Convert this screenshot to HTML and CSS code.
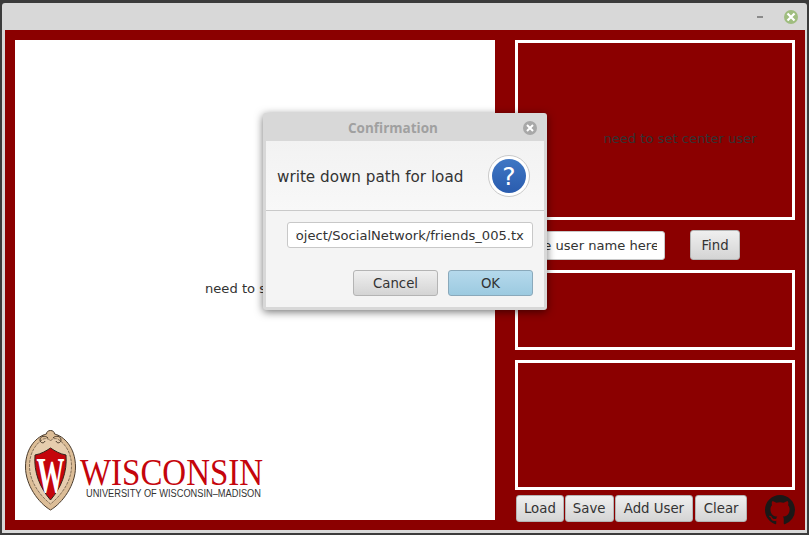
FILE: index.html
```html
<!DOCTYPE html>
<html lang="en">
<head>
<meta charset="utf-8">
<title>Social Network</title>
<link rel="stylesheet" href="styles.css">
</head>
<body>
<div class="window">
  <div class="titlebar">
    <span class="minimize"></span>
    <span class="close-round">
      <svg width="14" height="14" viewBox="0 0 14 14"><path d="M3.5 3.5l7 7M10.500 3.500l-7 7" stroke="#fff" stroke-width="2.200" fill="none"/></svg>
    </span>
  </div>
  <div class="main">
    <div class="canvas">
      <div class="canvas-msg">need to set center user</div>
      <svg class="logo" width="240" height="82" viewBox="0 0 240 82">
        <path d="M25.500 0.500c2.500 0 4 1.500 4 3.500c9 2 21 13 21 33c0 18-13 36-25 43c-12-7-25-25-25-43c0-20 12-31 21-33c0-2 1.500-3.500 4-3.500z" fill="#dcbd97" stroke="#4a3b2c" stroke-width="1"/>
        <path d="M25.500 11c1-2 4-3 7-2c7 4 14 13 14 27c0 16-11 30-21 38c-10-8-21-22-21-38c0-14 7-23 14-27c3-1 6 0 7 2z" fill="#e6cdae" stroke="#5b4a38" stroke-width="0.700" stroke-dasharray="3 1"/>
        <path d="M23 8c-3-3-8-2-8 2c0 3 4 4 5 1M28 8c3-3 8-2 8 2c0 3-4 4-5 1" fill="none" stroke="#4a3b2c" stroke-width="1"/>
        <path d="M10 25c6-1 11-4 15.500-7c4.500 3 9.500 6 15.500 7c1.500 17-5 33-15.500 45c-10.500-12-17-28-15.500-45z" fill="#c5050c" stroke="#33241c" stroke-width="1"/>
        <text class="crest-w" x="25.500" y="62" text-anchor="middle" textLength="28" lengthAdjust="spacingAndGlyphs">W</text>
        <text class="word" x="55" y="55" textLength="183" lengthAdjust="spacingAndGlyphs">WISCONSIN</text>
        <text class="sub" x="61" y="66.500" textLength="175" lengthAdjust="spacingAndGlyphs">UNIVERSITY OF WISCONSIN–MADISON</text>
      </svg>
    </div>
    <div class="side">
      <div class="box box-center"><span class="box-msg">need to set center user</span></div>
      <div class="search-row">
        <div class="field search-field"><span class="clip"><span>Type the user name here</span></span></div>
        <button class="btn find-btn">Find</button>
      </div>
      <div class="box box-mid"></div>
      <div class="box box-low"></div>
      <div class="actions">
        <button class="btn load-btn">Load</button>
        <button class="btn save-btn">Save</button>
        <button class="btn add-btn">Add User</button>
        <button class="btn clear-btn">Clear</button>
        <svg class="github" width="30" height="30" viewBox="0 0 16 16"><path fill="#1b1817" d="M8 0C3.580 0 0 3.580 0 8c0 3.540 2.290 6.530 5.470 7.590.4.070.55-.17.55-.38 0-.19-.01-.82-.01-1.490-2.010.37-2.530-.49-2.690-.94-.09-.23-.48-.94-.82-1.130-.28-.15-.68-.52-.01-.53.63-.01 1.080.58 1.230.82.72 1.210 1.870.87 2.330.66.070-.52.28-.87.51-1.070-1.780-.2-3.640-.89-3.640-3.950 0-.87.31-1.590.82-2.150-.08-.2-.36-1.020.08-2.120 0 0 .67-.21 2.200.82.64-.18 1.320-.27 2-.27s1.360.09 2 .27c1.530-1.040 2.200-.82 2.200-.82.44 1.100.16 1.920.08 2.120.51.560.82 1.270.82 2.150 0 3.070-1.870 3.750-3.650 3.950.29.250.54.730.54 1.480 0 1.070-.01 1.930-.01 2.200 0 .210.15.460.55.380A8.010 8.010 0 0 0 16 8c0-4.420-3.580-8-8-8z"/></svg>
      </div>
    </div>
  </div>
</div>

<div class="dialog">
  <div class="dialog-title">
    <span class="dialog-title-text">Confirmation</span>
    <span class="dialog-close">
      <svg width="10" height="10" viewBox="0 0 10 10"><path d="M2 2l6 6M8 2l-6 6" stroke="#fff" stroke-width="2" fill="none"/></svg>
    </span>
  </div>
  <div class="dialog-body">
    <div class="dialog-head">
      <span class="dialog-msg">write down path for load</span>
      <svg class="question" width="42" height="42" viewBox="0 0 42 42">
        <defs><linearGradient id="qblue" x1="0" y1="0" x2="0" y2="1"><stop offset="0" stop-color="#3f77c4"/><stop offset="1" stop-color="#2a5cae"/></linearGradient></defs>
        <circle cx="21" cy="21" r="20.500" fill="#fff" stroke="#c9c9c9"/>
        <circle cx="21" cy="21" r="17" fill="url(#qblue)"/>
        <text x="21" y="30" text-anchor="middle" class="question-mark">?</text>
      </svg>
    </div>
    <div class="dialog-input-row">
      <div class="field path-field"><span class="clip"><span>/home/user/Project/SocialNetwork/friends_005.txt</span></span></div>
    </div>
    <div class="dialog-buttons">
      <button class="btn dialog-btn">Cancel</button>
      <button class="btn dialog-btn ok-btn">OK</button>
    </div>
  </div>
</div>
</body>
</html>
```

FILE: styles.css
```css
* { box-sizing: border-box; }
html, body { margin: 0; padding: 0; }
body {
  width: 809px;
  height: 535px;
  overflow: hidden;
  background: #3b3b3b;
  font-family: "DejaVu Sans", sans-serif;
  color: #333;
}
.window {
  margin: 3px 2px 0 2px;
  width: 805px;
  height: 530px;
  background: #d8d8d8;
  border-radius: 3px 3px 0 0;
  padding: 0 0 0 3px;
}
.titlebar {
  height: 27px;
  display: flex;
  align-items: center;
  justify-content: flex-end;
  padding: 0 9px 0 0;
}
.minimize {
  width: 6px;
  height: 2px;
  background: #8a8a8a;
  margin-right: 21px;
}
.close-round {
  width: 14px;
  height: 14px;
  border-radius: 50%;
  background: #9fbd7f;
  display: flex;
}
.main {
  width: 800px;
  height: 500px;
  background: #8b0000;
  padding: 10px;
  display: flex;
  gap: 20px;
}
.canvas {
  width: 480px;
  height: 480px;
  background: #fff;
  display: flex;
  flex-direction: column;
  padding: 0 0 8px 10px;
}
.canvas-msg {
  margin: 241px 0 0 180px;
  font-size: 13.100px;
  line-height: 16px;
  white-space: nowrap;
}
.logo { margin-top: auto; display: block; overflow: visible; }
.crest-w { font-family: "Liberation Serif", serif; font-weight: 700; font-size: 50px; fill: #fff; }
.word { font-family: "Liberation Serif", serif; font-size: 38px; fill: #c5050c; }
.sub { font-family: "Liberation Sans", sans-serif; font-size: 10px; fill: #333; }
.side {
  width: 280px;
  height: 480px;
  display: flex;
  flex-direction: column;
}
.box { border: 3px solid #fff; flex: none; }
.box-center {
  height: 180px;
  display: flex;
  align-items: center;
  justify-content: center;
  padding: 16px 0 0 50px;
}
.box-msg { font-size: 13.100px; color: #333; white-space: nowrap; }
.box-mid { height: 80px; }
.box-low { height: 130px; margin-top: 10px; }
.search-row {
  height: 50px;
  flex: none;
  display: flex;
  align-items: center;
  padding-left: 10px;
  gap: 25px;
}
.field {
  background: #fff;
  border: 1px solid #c8c8c8;
  border-radius: 3px;
  display: flex;
  align-items: center;
  font-size: 13.100px;
}
.clip {
  flex: 1;
  min-width: 0;
  overflow: hidden;
  display: flex;
  justify-content: flex-end;
  white-space: nowrap;
}
.clip > span { flex: none; }
.search-field {
  width: 140px;
  height: 29px;
  padding: 0 7px;
}
.search-field .clip > span { margin-right: -2px; }
.path-field {
  width: 246px;
  height: 26px;
  padding: 0 8px;
}
.path-field .clip > span { margin-right: -5px; }
.btn {
  font-family: "DejaVu Sans", sans-serif;
  font-size: 13.300px;
  color: #333;
  height: 27px;
  padding: 0;
  border: 1px solid #b4b4b4;
  border-radius: 3px;
  background: linear-gradient(#efefef, #d4d4d4);
}
.find-btn { width: 50px; height: 30px; }
.actions {
  flex: 1;
  min-height: 0;
  display: flex;
  align-items: flex-start;
  padding: 5px 0 0 1px;
  gap: 1px;
}
.load-btn { width: 48px; }
.save-btn { width: 49px; }
.add-btn { width: 79px; margin-right: 1px; }
.clear-btn { width: 52px; }
.github { margin-left: 17px; flex: none; }
.dialog {
  position: absolute;
  left: 263px;
  top: 113px;
  width: 284px;
  height: 197px;
  background: #d8d8d8;
  border-radius: 3px;
  box-shadow: 0 2px 8px rgba(0, 0, 0, 0.55);
  padding: 0 3px 3px;
  display: flex;
  flex-direction: column;
}
.dialog-title {
  height: 28px;
  flex: none;
  display: flex;
  align-items: center;
  padding: 1px 7px 0 82px;
}
.dialog-title-text {
  flex: 1;
  font-family: "Open Sans", sans-serif;
  font-weight: 700;
  font-size: 13.500px;
  color: #a0a0a0;
}
.dialog-close {
  width: 14px;
  height: 14px;
  border-radius: 50%;
  background: #a8a8a8;
  display: flex;
  align-items: center;
  justify-content: center;
}
.dialog-body {
  flex: 1;
  background: #f4f4f4;
  display: flex;
  flex-direction: column;
}
.dialog-head {
  height: 70px;
  flex: none;
  display: flex;
  align-items: center;
  justify-content: space-between;
  padding: 0 14px 0 11px;
  border-bottom: 1px solid #c9c9c9;
  background: linear-gradient(#f2f2f2, #f8f8f8);
}
.dialog-msg { font-size: 15.200px; color: #333; padding-top: 2px; }
.question-mark { font-family: "DejaVu Sans", sans-serif; font-size: 25px; fill: #fff; }
.dialog-input-row {
  display: flex;
  justify-content: flex-end;
  padding: 11px 11px 0 0;
}
.dialog-buttons {
  display: flex;
  justify-content: flex-end;
  gap: 10px;
  padding: 22px 11px 0 0;
}
.dialog-btn { width: 85px; height: 26px; }
.ok-btn {
  background: linear-gradient(#b5d9ec, #9ccae0);
  border-color: #8aa9bb;
}
```
